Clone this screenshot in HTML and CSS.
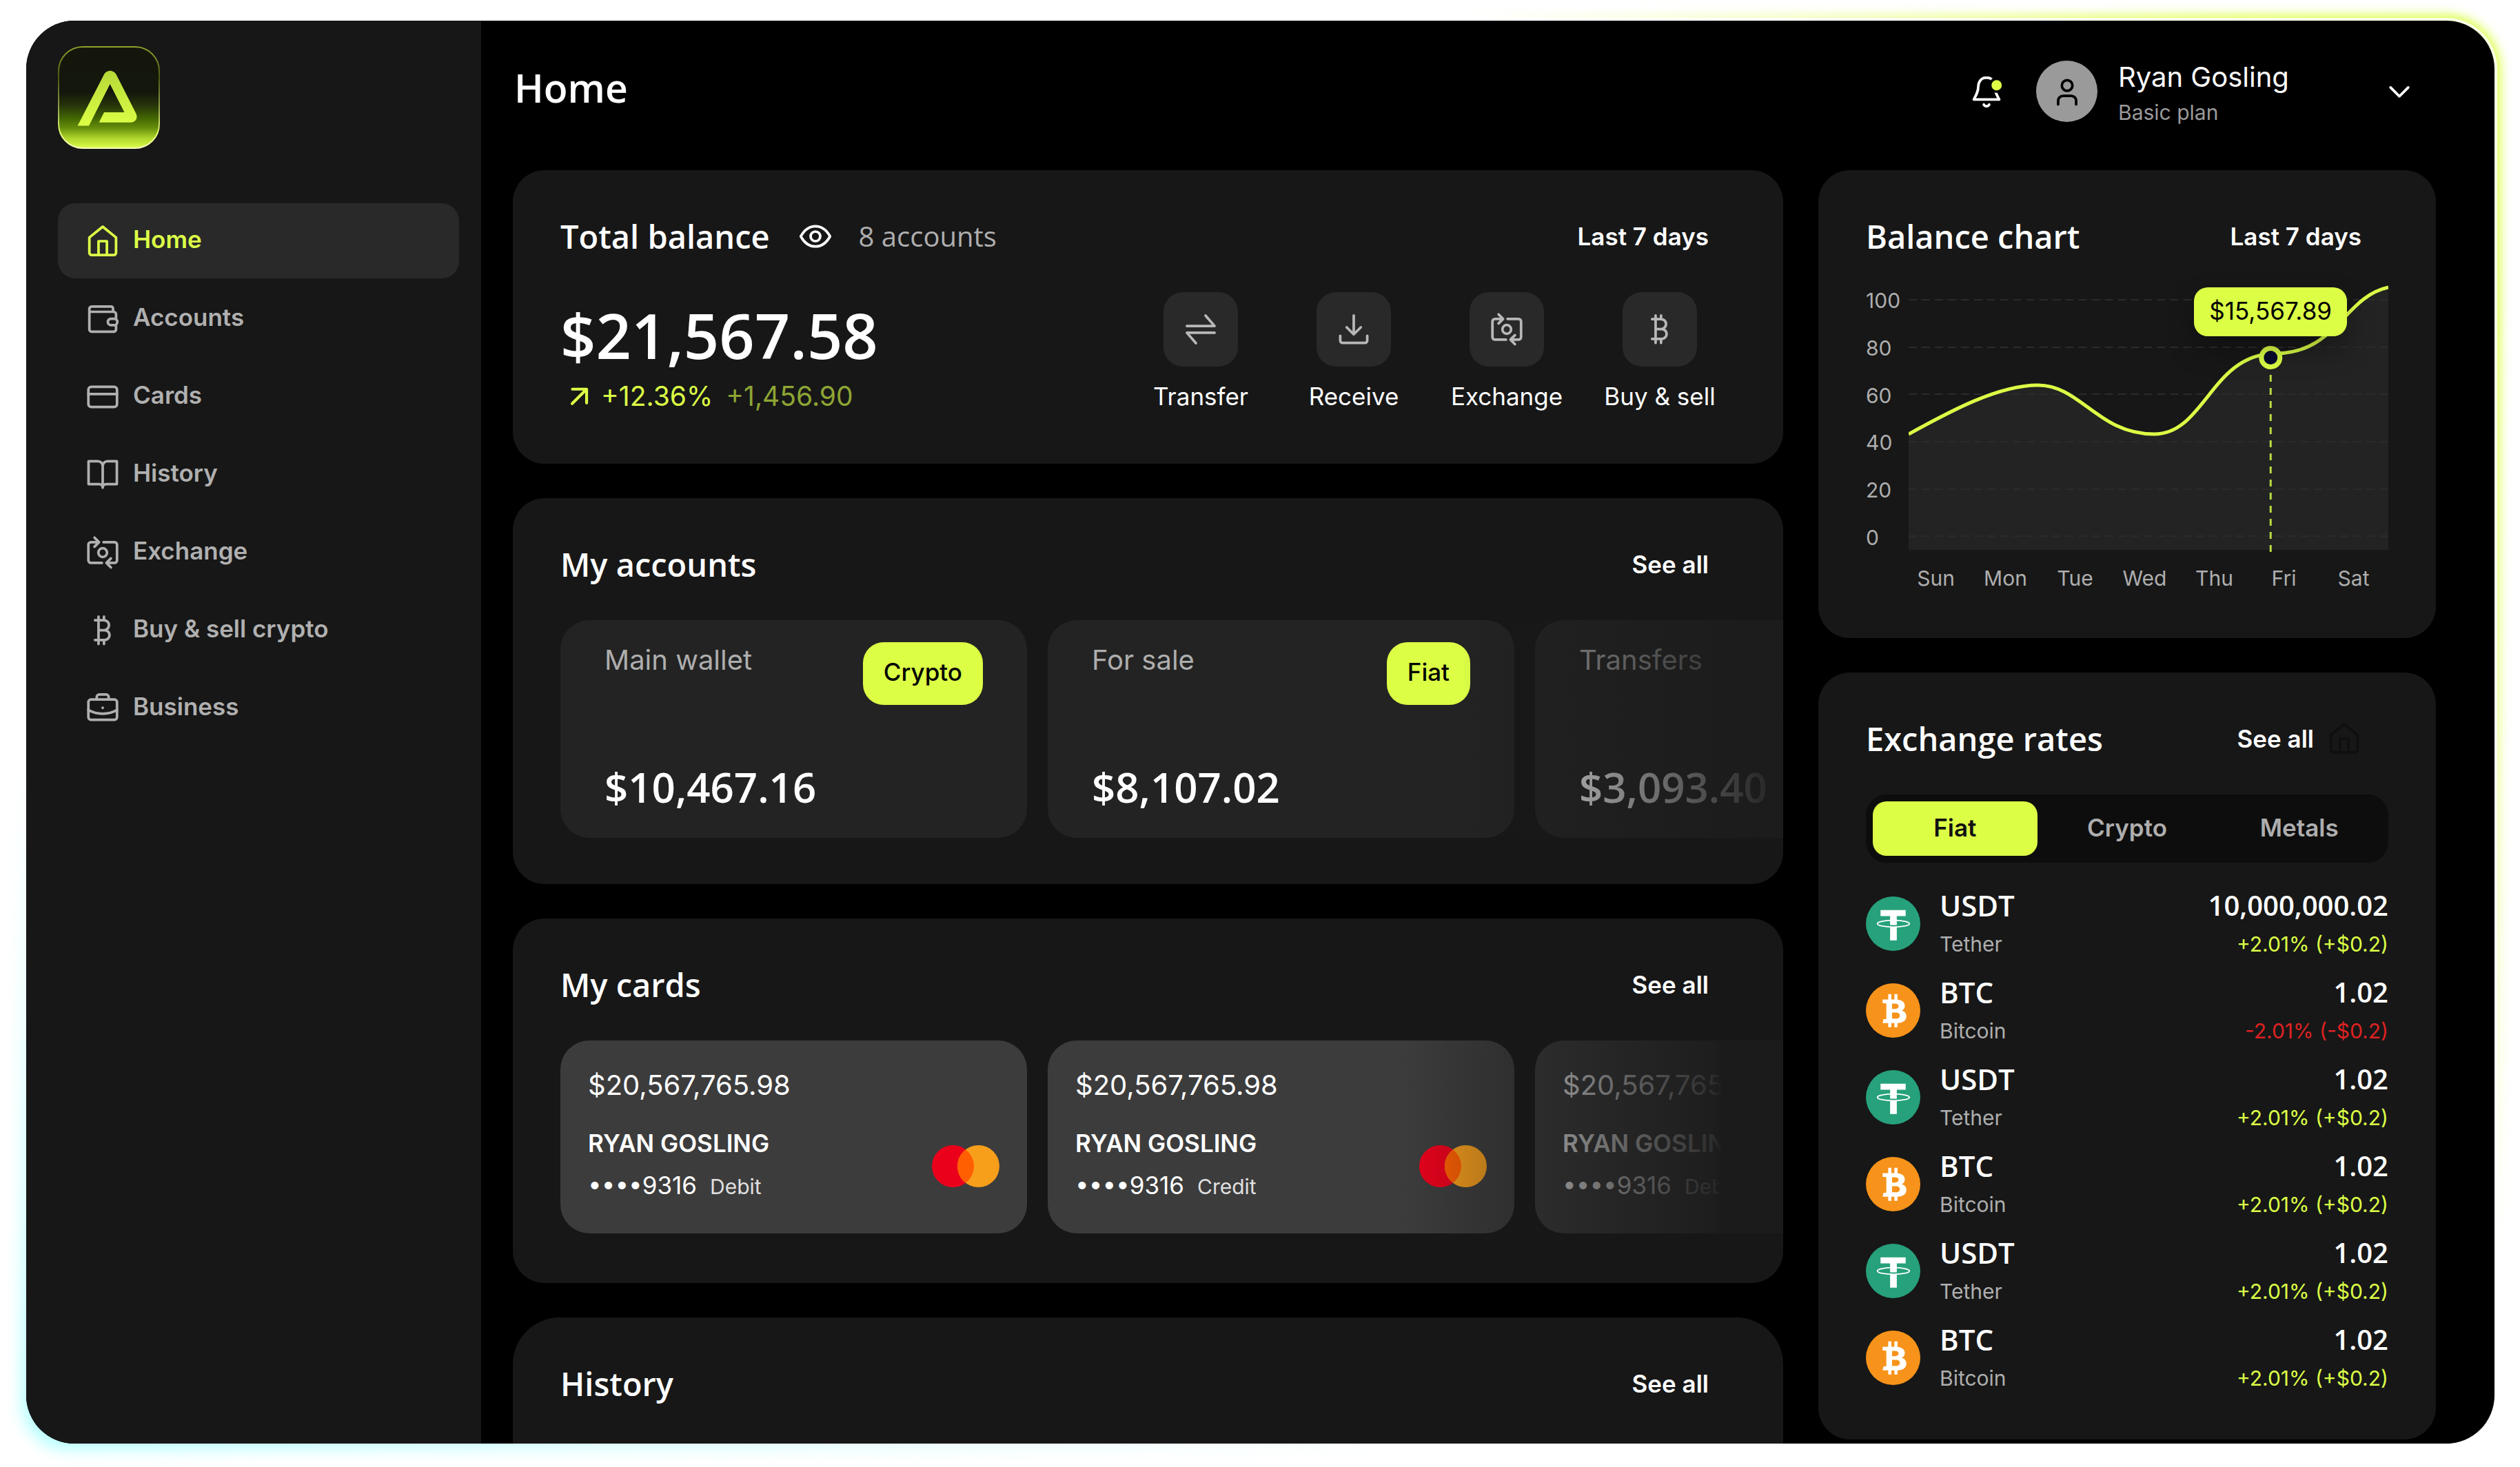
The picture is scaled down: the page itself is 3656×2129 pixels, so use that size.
FILE: index.html
```html
<!DOCTYPE html>
<html lang="en">
<head>
<meta charset="utf-8">
<meta name="viewport" content="width=device-width, initial-scale=1">
<title>Home</title>
<link rel="stylesheet" href="styles.css">
</head>
<body>
<svg class="sprite" aria-hidden="true">
  <symbol id="i-home" viewBox="0 0 24 24"><path d="M3.7 9.7 12 3l8.3 6.7v9.500a1.400 1.400 0 0 1-1.400 1.400H5.100a1.400 1.400 0 0 1-1.400-1.400Z"/><path d="M9.400 20.500V12h5.200v8.500"/></symbol>
  <symbol id="i-wallet" viewBox="0 0 24 24"><path d="M18.400 7.500V5.400a1.200 1.200 0 0 0-1.200-1.200H5.200a1.500 1.500 0 0 0-1.500 1.500v12.700a1.500 1.500 0 0 0 1.500 1.500h13.600a1.500 1.500 0 0 0 1.500-1.500v-2.400M3.700 7.500h15.100A1.500 1.500 0 0 1 20.300 9v2.600"/><rect x="15.200" y="11.800" width="5.900" height="4" rx="2"/></symbol>
  <symbol id="i-card" viewBox="0 0 24 24"><rect x="3.100" y="5.700" width="17.800" height="12.600" rx="1.800"/><path d="M3.100 10.200h17.800"/></symbol>
  <symbol id="i-book" viewBox="0 0 24 24"><path d="M12 6.600c0-1.700-1.300-3-3-3H3.200v14.200h6.600c1.300 0 2.200 1 2.200 2.200 0-1.200.9-2.200 2.200-2.200h6.600V3.600H15c-1.700 0-3 1.300-3 3ZM12 6.600V19.800"/></symbol>
  <symbol id="i-exchange" viewBox="0 0 24 24"><path d="M11.500 18.400H4.700a1.600 1.600 0 0 1-1.600-1.600V7.100a1.600 1.600 0 0 1 1.600-1.600h4.900M6.900 2.700l2.800 2.800-2.800 2.800M12.500 5.500h6.800a1.600 1.600 0 0 1 1.600 1.600v9.700a1.600 1.600 0 0 1-1.600 1.600h-4.900M17.100 15.600l-2.800 2.800 2.800 2.800"/><circle cx="12" cy="12" r="2.700"/></symbol>
  <symbol id="i-btc" viewBox="0 0 24 24"><path d="M7.200 5.600h5.600a3.100 3.100 0 0 1 0 6.200H9.400M12.800 11.800h.4a3.050 3.050 0 0 1 0 6.100h-6M9.400 3.400v17M12.800 3.400v2.200M12.800 17.900v2.500"/></symbol>
  <symbol id="i-case" viewBox="0 0 24 24"><rect x="3.100" y="6.500" width="17.800" height="12.600" rx="1.600"/><path d="M8.300 6.500V4.900a1.500 1.500 0 0 1 1.500-1.500h4.400a1.500 1.500 0 0 1 1.500 1.500v1.600M3.100 13c5.400 3.100 12.400 3.100 17.800 0M12 11.600v.1"/></symbol>
  <symbol id="i-eye" viewBox="0 0 24 24"><path d="M2.900 12C5.100 8 8 5.700 12 5.700S18.900 8 21.100 12C18.900 16 16 18.300 12 18.300S5.100 16 2.900 12Z"/><circle cx="12" cy="12" r="3"/></symbol>
  <symbol id="i-transfer" viewBox="0 0 24 24"><path d="M3.400 9.900h17.200L15 3.400M20.600 14.100H3.400L9 20.600"/></symbol>
  <symbol id="i-receive" viewBox="0 0 24 24"><path d="M12 3.400V15M7.600 10.700 12 15.100l4.400-4.400M3.600 16v3A1.400 1.400 0 0 0 5 20.400h14a1.400 1.400 0 0 0 1.400-1.400v-3"/></symbol>
  <symbol id="i-up" viewBox="0 0 24 24"><path d="M7.300 16.600 15.900 8M7.500 7.600h8.800v8.600"/></symbol>
  <symbol id="i-down" viewBox="0 0 24 24"><path d="M6.500 9.400 12 14.900l5.500-5.500"/></symbol>
  <symbol id="i-user" viewBox="0 0 24 24"><circle cx="12" cy="8.200" r="3.300"/><path d="M6.400 19.900v-2.200a3.100 3.100 0 0 1 3.100-3.100h5a3.100 3.100 0 0 1 3.100 3.100v2.200"/></symbol>
  <symbol id="i-bell" viewBox="0 0 24 24"><path d="M12 3.300c-3.300 0-5 2.500-5.100 5.300 0 3.400-1.300 5.700-2.800 8.300h15.800c-1.500-2.600-2.800-4.900-2.800-8.300C17 5.800 15.300 3.300 12 3.300Z"/><path d="M10.300 20a1.800 1.600 0 0 0 3.400 0"/><circle cx="18.300" cy="8" r="4.800" fill="#000" stroke="none"/><circle cx="18.300" cy="8" r="3.200" fill="#dcff46" stroke="none"/></symbol>
  <symbol id="i-usdt" viewBox="0 0 78 78"><circle cx="39" cy="39" r="39" fill="#26a17b"/><path fill="#fff" d="M21 19.500h36v8.700H44.300V41H34.700V28.200H21ZM34.700 44h9.600v19h-9.600Z"/><ellipse cx="39.400" cy="39" rx="23" ry="4.800" fill="none" stroke="#fff" stroke-width="1.800"/></symbol>
  <symbol id="i-bitcoin" viewBox="0 0 78 78"><circle cx="39" cy="39" r="39" fill="#f7931a"/><path fill="#fff" fill-rule="evenodd" d="M32 15.500h4.500v7.700h4.300v-7.700h4.500v8c6.500.6 10.500 3.600 10.500 8.800 0 3.400-1.700 5.700-4.600 6.800 4.300 1.100 6.800 3.900 6.800 8.200 0 5.900-4.500 9.300-12.700 9.600V63h-4.500v-6h-4.300v6H32v-6h-8l1.200-5.600h2.600c1.100 0 1.500-.5 1.500-1.500V30.300c0-1-.5-1.600-1.600-1.600H24v-5.500h8ZM37.500 29.200v7.500h3.800c3.700 0 5.500-1.200 5.500-3.800 0-2.500-1.800-3.700-5.500-3.700ZM37.500 42v8.700h4.700c4.300 0 6.400-1.400 6.400-4.400S46.500 42 42.200 42Z"/></symbol>
  <symbol id="i-mastercard" viewBox="0 0 98 61"><circle cx="30.500" cy="30.500" r="30.500" fill="#eb001b"/><circle cx="67.500" cy="30.500" r="30.500" fill="#f79e1b"/><path fill="#ff5f00" d="M49 6.200a30.500 30.500 0 0 1 0 48.600a30.500 30.500 0 0 1 0-48.600Z"/></symbol>
</svg>

<div class="stage">
  <div class="glow glow-lime" aria-hidden="true"></div>
  <div class="glow-ring" aria-hidden="true"></div>
  <div class="glow glow-cyan" aria-hidden="true"></div>

  <div class="app">
    <aside class="sidebar">
      <svg class="logo" viewBox="0 0 148 149" role="img" aria-label="Logo">
        <defs>
          <linearGradient id="tile" x1="0" y1="0" x2="0" y2="1"><stop offset="0" stop-color="#14160c"/><stop offset=".45" stop-color="#14170b"/><stop offset=".58" stop-color="#27350a"/><stop offset=".7" stop-color="#426503"/><stop offset=".8" stop-color="#668e0b"/><stop offset=".9" stop-color="#add42a"/><stop offset="1" stop-color="#ddff4a"/></linearGradient>
          <linearGradient id="edge" x1="0" y1="0" x2="0" y2="1"><stop offset="0" stop-color="#8ea32c"/><stop offset=".3" stop-color="#4a5715"/><stop offset=".6" stop-color="#8f9f4a"/><stop offset=".85" stop-color="#e6ff73"/><stop offset="1" stop-color="#fbffc0"/></linearGradient>
          <linearGradient id="mark" x1="0" y1="0" x2="0" y2="1"><stop offset="0" stop-color="#b5d838"/><stop offset="1" stop-color="#dcff46"/></linearGradient>
        </defs>
        <rect x="1" y="1" width="146" height="147" rx="35" fill="url(#tile)" stroke="url(#edge)" stroke-width="2"/>
        <path fill="url(#mark)" d="M28.600 115.400 66.500 42c3.600-8.300 14.800-8.300 18.600 0L113 97c4 7.500-.5 13.700-7.500 13.700H59.600L67 96h29.500L75.600 55 45 115.400Z"/>
      </svg>
      <nav class="nav">
        <a class="nav-item is-active" href="#"><svg class="icon"><use href="#i-home"/></svg><span>Home</span></a>
        <a class="nav-item" href="#"><svg class="icon"><use href="#i-wallet"/></svg><span>Accounts</span></a>
        <a class="nav-item" href="#"><svg class="icon"><use href="#i-card"/></svg><span>Cards</span></a>
        <a class="nav-item" href="#"><svg class="icon"><use href="#i-book"/></svg><span>History</span></a>
        <a class="nav-item" href="#"><svg class="icon"><use href="#i-exchange"/></svg><span>Exchange</span></a>
        <a class="nav-item" href="#"><svg class="icon"><use href="#i-btc"/></svg><span>Buy &amp; sell crypto</span></a>
        <a class="nav-item" href="#"><svg class="icon"><use href="#i-case"/></svg><span>Business</span></a>
      </nav>
    </aside>

    <main class="main">
      <header class="topbar">
        <h1 class="page-title">Home</h1>
        <div class="user">
          <button class="plain" type="button" aria-label="Notifications"><svg class="icon"><use href="#i-bell"/></svg></button>
          <div class="avatar"><svg class="icon"><use href="#i-user"/></svg></div>
          <div class="user-text">
            <span class="user-name">Ryan Gosling</span>
            <span class="user-plan">Basic plan</span>
          </div>
          <button class="plain user-more" type="button" aria-label="Account menu"><svg class="icon"><use href="#i-down"/></svg></button>
        </div>
      </header>

      <div class="columns">
        <div class="column">
          <section class="panel">
            <div class="panel-head">
              <h2 class="panel-title">Total balance</h2>
              <button class="plain eye" type="button" aria-label="Hide balance"><svg class="icon"><use href="#i-eye"/></svg></button>
              <span class="count">8 accounts</span>
              <button class="head-action" type="button">Last 7 days</button>
            </div>
            <div class="balance">
              <div>
                <div class="balance-value">$21,567.58</div>
                <div class="trend"><svg class="icon"><use href="#i-up"/></svg><span class="trend-percent">+12.36%</span><span class="trend-sum">+1,456.90</span></div>
              </div>
              <div class="actions">
                <button class="action" type="button"><span class="action-tile"><svg class="icon"><use href="#i-transfer"/></svg></span>Transfer</button>
                <button class="action" type="button"><span class="action-tile"><svg class="icon"><use href="#i-receive"/></svg></span>Receive</button>
                <button class="action" type="button"><span class="action-tile"><svg class="icon"><use href="#i-exchange"/></svg></span>Exchange</button>
                <button class="action" type="button"><span class="action-tile"><svg class="icon"><use href="#i-btc"/></svg></span>Buy &amp; sell</button>
              </div>
            </div>
          </section>

          <section class="panel">
            <div class="panel-head"><h2 class="panel-title">My accounts</h2><a class="head-action" href="#">See all</a></div>
            <div class="strip strip-accounts">
              <article class="account"><div class="account-top"><h3 class="account-name">Main wallet</h3><span class="chip">Crypto</span></div><div class="account-sum">$10,467.16</div></article>
              <article class="account"><div class="account-top"><h3 class="account-name">For sale</h3><span class="chip">Fiat</span></div><div class="account-sum">$8,107.02</div></article>
              <article class="account"><div class="account-top"><h3 class="account-name">Transfers</h3></div><div class="account-sum">$3,093.40</div></article>
            </div>
          </section>

          <section class="panel panel-cards">
            <div class="panel-head"><h2 class="panel-title">My cards</h2><a class="head-action" href="#">See all</a></div>
            <div class="strip strip-cards">
              <article class="bank-card"><div class="card-sum">$20,567,765.98</div><div class="card-foot"><div><div class="card-owner">RYAN GOSLING</div><div class="card-number">••••9316<span class="card-kind">Debit</span></div></div><svg class="mastercard"><use href="#i-mastercard"/></svg></div></article>
              <article class="bank-card"><div class="card-sum">$20,567,765.98</div><div class="card-foot"><div><div class="card-owner">RYAN GOSLING</div><div class="card-number">••••9316<span class="card-kind">Credit</span></div></div><svg class="mastercard"><use href="#i-mastercard"/></svg></div></article>
              <article class="bank-card"><div class="card-sum">$20,567,765.98</div><div class="card-foot"><div><div class="card-owner">RYAN GOSLING</div><div class="card-number">••••9316<span class="card-kind">Debit</span></div></div></div></article>
            </div>
          </section>

          <section class="panel panel-history">
            <div class="panel-head"><h2 class="panel-title">History</h2><a class="head-action" href="#">See all</a></div>
          </section>
        </div>

        <div class="column">
          <section class="panel">
            <div class="panel-head"><h2 class="panel-title">Balance chart</h2><button class="head-action" type="button">Last 7 days</button></div>
            <div class="chart">
              <div class="chart-scale"><span>100</span><span>80</span><span>60</span><span>40</span><span>20</span><span>0</span></div>
              <div class="plot">
                <svg class="plot-svg" viewBox="0 0 697 400" preserveAspectRatio="none" role="img" aria-label="Balance over the last 7 days">
                  <path fill="#232323" d="M0 223C60 190 130 152 188 152 250 152 275 223 357 223 430 223 440 107 532 106 622 106 632 24 697 10V391H0Z"/>
                  <path stroke="#2b2b2b" stroke-width="2" stroke-dasharray="12 7" d="M0 28H697M0 97H697M0 165H697M0 234H697M0 303H697M0 371H697"/>
                  <path fill="none" stroke="#dcff46" stroke-width="5" d="M0 223C60 190 130 152 188 152 250 152 275 223 357 223 430 223 440 107 532 106 622 106 632 24 697 10"/>
                  <path stroke="#b9dc42" stroke-width="3" stroke-dasharray="10 9" d="M526 137V395"/>
                  <circle cx="526" cy="112" r="13.500" fill="#070c2c" stroke="#dcff46" stroke-width="7"/>
                </svg>
                <div class="tooltip">$15,567.89</div>
              </div>
            </div>
            <div class="chart-days"><span>Sun</span><span>Mon</span><span>Tue</span><span>Wed</span><span>Thu</span><span>Fri</span><span>Sat</span></div>
          </section>

          <section class="panel">
            <div class="panel-head"><h2 class="panel-title">Exchange rates</h2><a class="head-action head-action-icon" href="#">See all<svg class="icon ghost"><use href="#i-home"/></svg></a></div>
            <div class="tabs" role="tablist">
              <button class="tab is-active" role="tab" aria-selected="true" type="button">Fiat</button>
              <button class="tab" role="tab" aria-selected="false" type="button">Crypto</button>
              <button class="tab" role="tab" aria-selected="false" type="button">Metals</button>
            </div>
            <ul class="rates">
              <li class="rate"><svg class="coin"><use href="#i-usdt"/></svg><div><div class="rate-code">USDT</div><div class="rate-name">Tether</div></div><div class="rate-end"><div class="rate-price">10,000,000.02</div><div class="rate-change">+2.01% (+$0.2)</div></div></li>
              <li class="rate"><svg class="coin"><use href="#i-bitcoin"/></svg><div><div class="rate-code">BTC</div><div class="rate-name">Bitcoin</div></div><div class="rate-end"><div class="rate-price">1.02</div><div class="rate-change is-down">-2.01% (-$0.2)</div></div></li>
              <li class="rate"><svg class="coin"><use href="#i-usdt"/></svg><div><div class="rate-code">USDT</div><div class="rate-name">Tether</div></div><div class="rate-end"><div class="rate-price">1.02</div><div class="rate-change">+2.01% (+$0.2)</div></div></li>
              <li class="rate"><svg class="coin"><use href="#i-bitcoin"/></svg><div><div class="rate-code">BTC</div><div class="rate-name">Bitcoin</div></div><div class="rate-end"><div class="rate-price">1.02</div><div class="rate-change">+2.01% (+$0.2)</div></div></li>
              <li class="rate"><svg class="coin"><use href="#i-usdt"/></svg><div><div class="rate-code">USDT</div><div class="rate-name">Tether</div></div><div class="rate-end"><div class="rate-price">1.02</div><div class="rate-change">+2.01% (+$0.2)</div></div></li>
              <li class="rate"><svg class="coin"><use href="#i-bitcoin"/></svg><div><div class="rate-code">BTC</div><div class="rate-name">Bitcoin</div></div><div class="rate-end"><div class="rate-price">1.02</div><div class="rate-change">+2.01% (+$0.2)</div></div></li>
            </ul>
          </section>
        </div>
      </div>
    </main>
  </div>
</div>
</body>
</html>
```
FILE: styles.css
```css
:root {
  --lime: #dcff46;
  --panel: #171717;
  --tile: #232323;
  --raised: #292929;
  --muted: #aeaeae;
  --display: "Open Sans", "Noto Sans", sans-serif;
}

* { box-sizing: border-box; }

body, h1, h2, h3, ul { margin: 0; padding: 0; }

body {
  background: #fff;
  color: #fff;
  font: 400 35px/42px Inter, "Liberation Sans", sans-serif;
}

a { color: inherit; text-decoration: none; }

button {
  margin: 0;
  padding: 0;
  border: 0;
  background: none;
  color: inherit;
  font: inherit;
  cursor: pointer;
}

.sprite { position: absolute; width: 0; height: 0; }

.icon {
  display: block;
  flex: none;
  width: 56px;
  height: 56px;
  fill: none;
  stroke: currentColor;
  stroke-width: 1.6;
  stroke-linecap: round;
  stroke-linejoin: round;
}

/* Window and the light around it */
.stage {
  position: relative;
  height: 100vh;
  padding: 30px 37px 34px 38px;
  overflow: hidden;
}

.glow, .glow-ring {
  position: absolute;
  inset: 30px 37px 34px 38px;
  border-radius: 70px;
}

.glow-lime {
  inset: 22px 29px 34px 38px;
  border-radius: 78px;
  background: radial-gradient(1500px 1800px at 100% 0, #d8ff3c 0%, #dcff46 25%, rgba(220, 255, 70, 0) 100%);
  filter: blur(8px);
}

.glow-ring { box-shadow: 0 0 0 4px rgba(255, 255, 255, .85); }

.glow-cyan {
  inset: 30px 37px 24px 30px;
  background: radial-gradient(2000px 1000px at 0 100%, #b8ffff 0%, rgba(200, 255, 255, .7) 40%, rgba(220, 255, 255, 0) 100%);
  filter: blur(10px);
}

.app {
  position: relative;
  display: flex;
  height: 100%;
  border-radius: 70px;
  background: #000;
  overflow: hidden;
}

/* Sidebar */
.sidebar {
  flex: none;
  width: 660px;
  padding: 37px 32px 37px 46px;
  background: var(--panel);
}

.logo { display: block; width: 148px; height: 149px; }

.nav {
  display: flex;
  flex-direction: column;
  gap: 4px;
  margin-top: 79px;
}

.nav-item {
  display: flex;
  align-items: center;
  gap: 16px;
  height: 109px;
  padding-left: 37px;
  border-radius: 25px;
  color: #b0b0b0;
  font-weight: 600;
}

.nav-item span { padding-bottom: 5px; }

.nav-item.is-active { background: var(--raised); color: var(--lime); }

/* Top bar */
.main {
  flex: 1;
  min-width: 0;
  padding: 58px 85px 0 46px;
}

.topbar {
  display: flex;
  align-items: center;
  justify-content: space-between;
  height: 89px;
  margin-bottom: 70px;
}

.page-title {
  padding: 0 0 12px 2px;
  font: 600 57px/80px var(--display);
}

.user { display: flex; align-items: center; padding-right: 25px; }

.avatar {
  display: grid;
  place-items: center;
  width: 89px;
  height: 89px;
  margin-left: 44px;
  border-radius: 50%;
  background: #9a9a9a;
  color: #000;
}

.user-text {
  display: flex;
  flex-direction: column;
  width: 348px;
  margin-left: 30px;
}

.user-name { font-size: 40px; line-height: 60px; }
.user-plan { color: #9a9a9a; font-size: 30px; line-height: 42px; }
.user-more { margin-left: 32px; }

/* Panels */
.columns {
  display: grid;
  grid-template-columns: minmax(0, 1843fr) minmax(0, 896fr);
  gap: 51px;
  align-items: start;
}

.column { display: flex; flex-direction: column; gap: 50px; }

.panel {
  padding: 62px 69px 67px;
  border-radius: 46px;
  background: var(--panel);
  overflow: hidden;
}

.panel-cards { padding-bottom: 72px; }
.panel-history { min-height: 400px; border-radius: 68px; }

.panel-head {
  display: flex;
  align-items: center;
  height: 68px;
  margin-bottom: 47px;
  padding-right: 39px;
}

.panel-title { font: 600 47px/64px var(--display); }

.eye { margin-left: 38px; }

.count {
  margin-left: 35px;
  color: var(--muted);
  font: 500 40px/56px var(--display);
}

.head-action { margin-left: auto; font-weight: 600; }

.head-action-icon {
  display: flex;
  align-items: center;
  gap: 16px;
  margin-right: -3px;
}

.ghost { color: #0f0f0f; }

/* Total balance */
.balance {
  display: flex;
  justify-content: space-between;
  padding: 0 31px 4px 0;
}

.balance-value { font: 600 90px/124px var(--display); }

.trend {
  display: flex;
  align-items: center;
  height: 54px;
  color: var(--lime);
  font-size: 39px;
}

.trend .icon { stroke-width: 1.8; }
.trend-percent { margin-left: 3px; }
.trend-sum { margin-left: 19px; color: #8ea534; }

.actions {
  display: grid;
  grid-template-columns: repeat(4, 158px);
  gap: 64px;
}

.action {
  display: flex;
  flex-direction: column;
  align-items: center;
  gap: 22px;
  white-space: nowrap;
}

.action-tile {
  display: grid;
  place-items: center;
  width: 108px;
  height: 108px;
  border-radius: 28px;
  background: var(--raised);
  color: #b8b8b8;
}

/* Horizontal strips that fade out at the panel's right edge */
.strip {
  position: relative;
  display: flex;
  gap: 30px;
  margin-right: -69px;
  overflow: hidden;
}

.strip::after {
  content: "";
  position: absolute;
  inset: 0 0 0 auto;
}

.strip-accounts::after {
  width: 467px;
  background: linear-gradient(90deg, rgba(23, 23, 23, 0), rgba(26, 26, 26, .42) 37%, rgba(27, 27, 27, .92) 92%, rgba(28, 28, 28, .96));
}

.strip-cards::after {
  width: 557px;
  background: linear-gradient(90deg, rgba(23, 23, 23, 0), rgba(24, 24, 24, .5) 42%, rgba(27, 27, 27, .92) 82%, #1b1b1b 84%);
}

.account {
  display: flex;
  flex: 0 0 677px;
  flex-direction: column;
  justify-content: space-between;
  height: 316px;
  padding: 32px 64px 34px;
  border-radius: 42px;
  background: var(--tile);
}

.account-top { display: flex; align-items: flex-start; justify-content: space-between; }

.account-name { color: var(--muted); font-size: 40px; font-weight: 400; line-height: 52px; }

.chip {
  padding: 22px 30px 27px;
  border-radius: 30px;
  background: var(--lime);
  color: #000;
  font-weight: 500;
}

.account-sum { font: 600 60px/80px var(--display); }

.bank-card {
  flex: 0 0 677px;
  padding: 39px 40px 44px;
  border-radius: 42px;
  background: #3c3c3c;
}

.card-sum { font-size: 40px; line-height: 52px; }

.card-foot {
  display: flex;
  align-items: center;
  justify-content: space-between;
  margin-top: 37px;
}

.card-owner { font-weight: 600; line-height: 42px; }
.card-number { margin-top: 16px; line-height: 48px; }
.card-kind { margin-left: 19px; color: #e0e0e0; font-size: 30px; }
.mastercard { width: 98px; height: 61px; }

/* Balance chart */
.chart { display: flex; height: 400px; margin-top: -17px; }

.chart-scale {
  display: flex;
  flex-direction: column;
  justify-content: space-between;
  flex: none;
  width: 62px;
  padding: 9px 0 7px;
  color: var(--muted);
  font-size: 30px;
  line-height: 40px;
}

.plot { position: relative; flex: 1; }

.plot-svg { display: block; width: 100%; height: 100%; }

.tooltip {
  position: absolute;
  top: 10px;
  right: 60px;
  padding: 13px 22px 16px;
  border-radius: 20px;
  background: var(--lime);
  box-shadow: 0 20px 40px rgba(0, 0, 0, .3);
  color: #000;
}

.chart-days {
  display: grid;
  grid-template-columns: repeat(7, 1fr);
  margin: 12px 0 0 51px;
  color: var(--muted);
  font-size: 30px;
  line-height: 40px;
  text-align: center;
}

/* Exchange rates */
.tabs {
  display: grid;
  grid-template-columns: repeat(3, 1fr);
  gap: 11px;
  padding: 10px;
  border-radius: 30px;
  background: #0d0d0d;
}

.tab {
  height: 79px;
  padding-bottom: 4px;
  border-radius: 20px;
  color: var(--muted);
  font-weight: 600;
}

.tab.is-active { background: var(--lime); color: #111; }

.rates {
  display: flex;
  flex-direction: column;
  gap: 22px;
  margin-top: 36px;
  list-style: none;
}

.rate { display: flex; align-items: center; }

.coin { flex: none; width: 79px; height: 79px; margin-right: 28px; }

.rate-end { margin-left: auto; text-align: right; }

.rate-code, .rate-price { font: 600 40px/52px var(--display); }

.rate-code { font-size: 42px; }

.rate-name, .rate-change { margin-top: 8px; font-size: 30px; line-height: 44px; }

.rate-name { color: var(--muted); }
.rate-change { color: var(--lime); }
.rate-change.is-down { color: #dd2222; }
```
